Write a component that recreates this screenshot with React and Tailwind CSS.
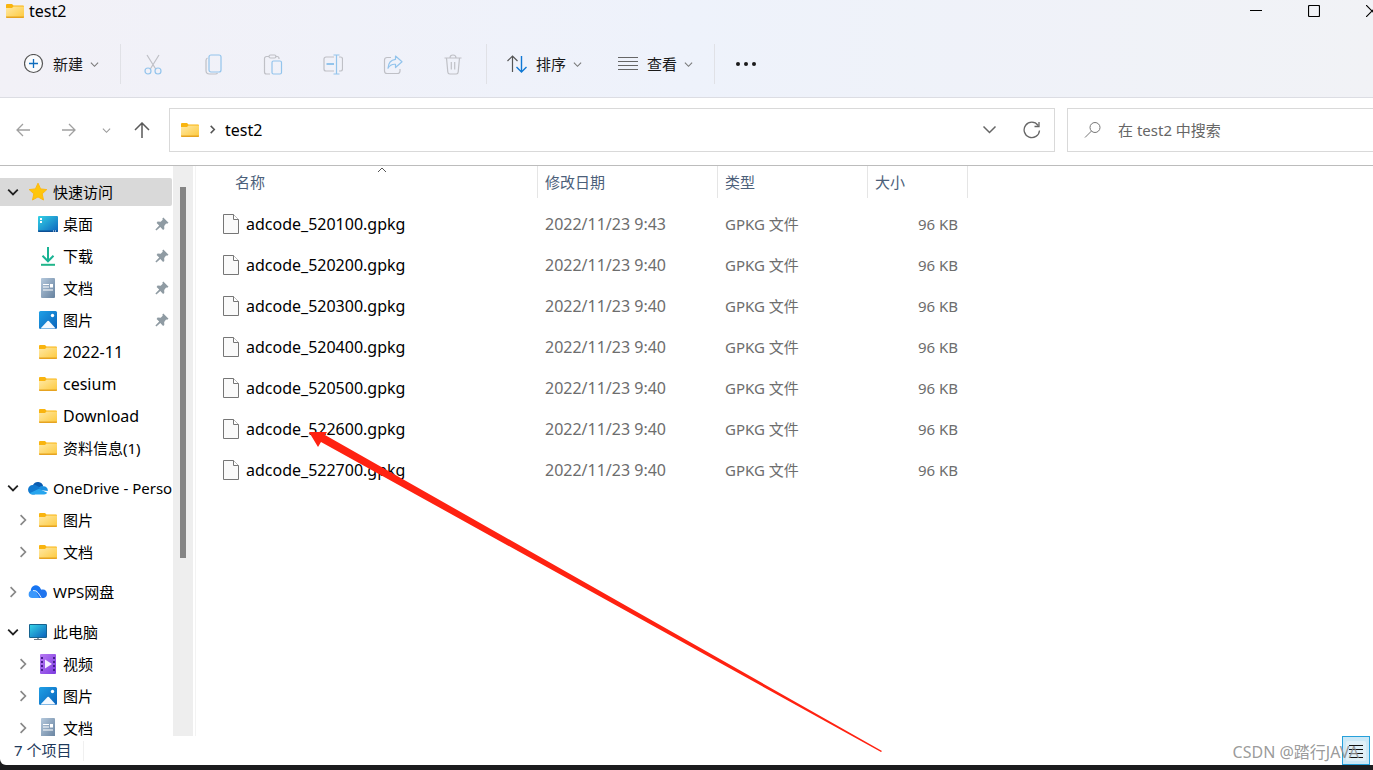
import React from "react";

const FolderIcon = () => (
  <svg width="20" height="20" viewBox="0 0 20 20" className="shrink-0">
    <defs>
      <linearGradient id="folder" x1="0" y1="0" x2="1" y2="1">
        <stop offset="0" stopColor="#ffe9a6" />
        <stop offset="1" stopColor="#fdc93c" />
      </linearGradient>
    </defs>
    <path d="M1 4a1 1 0 0 1 1-1h5l1.500 1.500H18a1 1 0 0 1 1 1V9H1z" fill="#f9b40f" />
    <path d="M1 7h6l1.500-1.500H19V16a1 1 0 0 1-1 1H2a1 1 0 0 1-1-1z" fill="url(#folder)" />
    <path d="M1 15.600V16a1 1 0 0 0 1 1h16a1 1 0 0 0 1-1v-.4z" fill="#e6a321" />
  </svg>
);

const StarIcon = () => (
  <svg width="20" height="20" viewBox="0 0 20 20" className="shrink-0">
    <path
      d="M10 1.200l2.600 5.700 6.200.7-4.600 4.200 1.300 6.200L10 14.900 4.500 18l1.300-6.200L1.200 7.600l6.200-.7z"
      fill="#ffc60a"
      stroke="#fdb813"
      strokeWidth="1"
      strokeLinejoin="round"
    />
  </svg>
);

const DesktopIcon = () => (
  <svg width="20" height="20" viewBox="0 0 20 20" className="shrink-0">
    <defs>
      <linearGradient id="desktop" x1="0" y1="0" x2="1" y2="1">
        <stop offset="0" stopColor="#35d2e6" />
        <stop offset="1" stopColor="#0b63bd" />
      </linearGradient>
    </defs>
    <rect y="2" width="20" height="16" rx="1" fill="url(#desktop)" />
    <path d="M0 16.500h20V17a1 1 0 0 1-1 1H1a1 1 0 0 1-1-1z" fill="#0c4f94" />
    <path d="M2 4h2v2H2zM2 7h2v2H2z" fill="#fff" />
    <path d="M15 17h1M17 17h1" stroke="#fff" />
  </svg>
);

const DownloadIcon = () => (
  <svg width="20" height="20" viewBox="0 0 20 20" className="shrink-0" fill="none">
    <path d="M10 1v14M4.500 9.800L10 15.300l5.500-5.500" stroke="#19b394" strokeWidth="2" />
    <path d="M3 18.800h14" stroke="#20b58a" strokeWidth="2" />
  </svg>
);

const DocumentIcon = () => (
  <svg width="20" height="20" viewBox="0 0 20 20" className="shrink-0">
    <defs>
      <linearGradient id="doc" x1="0" y1="0" x2="1" y2="1">
        <stop offset="0" stopColor="#b4c8dc" />
        <stop offset="1" stopColor="#67829f" />
      </linearGradient>
    </defs>
    <rect x="3" y="0" width="14" height="20" rx="1" fill="url(#doc)" />
    <path d="M5 6.500h6M5 9h6M5 12h10" stroke="#fff" strokeWidth="1.200" />
    <rect x="12" y="6" width="3" height="3.500" fill="#fff" />
  </svg>
);

const PictureIcon = () => (
  <svg width="20" height="20" viewBox="0 0 20 20" className="shrink-0">
    <defs>
      <linearGradient id="pic" x1="0" y1="0" x2="1" y2="1">
        <stop offset="0" stopColor="#1fa0e6" />
        <stop offset="1" stopColor="#0a63bb" />
      </linearGradient>
    </defs>
    <rect x="1" y="1" width="18" height="18" rx="1.500" fill="url(#pic)" />
    <path d="M2.500 18.500l7-7.500a1 1 0 0 1 1.400 0l6.800 7.500z" fill="#f4f9ff" />
    <circle cx="14.500" cy="5.500" r="1.700" fill="#fff" />
  </svg>
);

const VideoIcon = () => (
  <svg width="20" height="20" viewBox="0 0 20 20" className="shrink-0">
    <defs>
      <linearGradient id="video" x1="0" y1="0" x2="1" y2="1">
        <stop offset="0" stopColor="#b87af3" />
        <stop offset="1" stopColor="#7d3be0" />
      </linearGradient>
    </defs>
    <rect x="2" y="0" width="16" height="20" rx="1" fill="url(#video)" />
    <path d="M4 3v15M16 3v15" stroke="#461d8c" strokeWidth="2" strokeDasharray="2 2" />
    <path d="M7 5.500v9l7-4.500z" fill="#f5edff" />
  </svg>
);

const OneDriveIcon = () => (
  <svg width="20" height="20" viewBox="0 0 20 20" className="shrink-0">
    <path d="M5 7a5.500 5.500 0 0 1 10.200 1.200L9 12z" fill="#0a5cb0" />
    <path d="M4.600 16.500A4.700 4.700 0 0 1 5 7q2-.5 3.500.5l6 3.500-8 5.500z" fill="#1079cf" />
    <path d="M11 9.500q2-1.700 4.200-1.300A4.300 4.300 0 0 1 19.800 13L12 12z" fill="#1a8fe0" />
    <path d="M1.500 15.200L11 10.800l8.300 3.900a3.600 3.600 0 0 1-3.300 1.800H4.600q-2 0-3.100-1.300z" fill="#27a5ee" />
  </svg>
);

const WpsIcon = () => (
  <svg width="20" height="20" viewBox="0 0 20 20" className="shrink-0">
    <path d="M3 10a5 5 0 0 1 9.800-3L16 15.500H7z" fill="#1775f2" />
    <path d="M4.500 8.500Q8 7.500 10 10l3.500 6H4.300a3.700 3.700 0 0 1 .2-7.500z" fill="#3a97fb" />
    <path d="M9 12q2-5 6-4.500a4.300 4.300 0 0 1 .5 8.500h-4z" fill="#1f74ee" />
    <path d="M5 8.500Q8.300 8 10.300 11l3 4.800" fill="none" stroke="#d8ecff" />
  </svg>
);

const ComputerIcon = () => (
  <svg width="20" height="20" viewBox="0 0 20 20" className="shrink-0">
    <path d="M9 15h2v2.500H9z" fill="#8e9aa6" />
    <path d="M6 17.500h8" stroke="#6b7782" />
    <rect x="1" y="2" width="18" height="14" rx="1" fill="#16638f" />
    <rect x="2" y="3" width="16" height="12" fill="url(#desktop)" />
  </svg>
);

const PinIcon = () => (
  <svg width="14" height="14" viewBox="0 0 14 14" className="ml-auto shrink-0">
    <path
      d="M8.300.5l5.200 5.200-1.400 1-1-.1-1.900 2.300.1 3-1.200 1-2.800-2.800L1.400 13.600l-1-1L4.200 8.600 1.600 6l1-1.400 3.100.1L7.700 2.800l-.3-1.200z"
      fill="#8f9ba3"
    />
  </svg>
);

const FileIcon = () => (
  <svg width="16" height="20" viewBox="0 0 16 20" className="shrink-0">
    <path d="M.5.500h10l5 5v14H.5z" fill="#fafafa" stroke="#767676" />
    <path d="M10.500.5v5h5" fill="#fff" stroke="#767676" />
  </svg>
);

const Chevron = ({ dir = "down", size = 10, color = "#777", weight = 1.2 }) => {
  const paths = {
    down: "M1 3l4 4 4-4",
    right: "M3 1l4 4-4 4",
    up: "M1 7l4-4 4 4",
  };
  return (
    <svg width={size} height={size} viewBox="0 0 10 10" fill="none" className="shrink-0">
      <path d={paths[dir]} stroke={color} strokeWidth={weight} />
    </svg>
  );
};

const G = "#bfc0c6";
const B = "#93c4ec";

const actions = [
  {
    label: "剪切",
    icon: (
      <>
        <path d="M4 1l9 14.500M16 1L7 15.500" stroke={G} />
        <circle cx="5" cy="17" r="3" stroke={B} />
        <circle cx="15" cy="17" r="3" stroke={B} />
      </>
    ),
  },
  {
    label: "复制",
    icon: (
      <>
        <path d="M4.500 4q-1.500.7-1.500 2.500v10q0 3.500 3.500 3.500h6q1.500 0 2-1" stroke={G} />
        <rect x="6" y="1" width="12" height="17" rx="2" stroke={B} />
      </>
    ),
  },
  {
    label: "粘贴",
    icon: (
      <>
        <path d="M6 2.500H3.500a2 2 0 0 0-2 2V18a2 2 0 0 0 2 2H7M12.500 2.500H14a2 2 0 0 1 2 2V5" stroke={G} />
        <rect x="6" y="1" width="7" height="3" rx="1.500" stroke={G} />
        <rect x="9" y="7" width="9.500" height="13" rx="1.500" stroke={B} />
      </>
    ),
  },
  {
    label: "重命名",
    icon: (
      <>
        <path d="M11 3H3a2 2 0 0 0-2 2v10a2 2 0 0 0 2 2h8M16 3h1.500a2 2 0 0 1 2 2v10a2 2 0 0 1-2 2H16" stroke={G} />
        <path d="M3.500 10H11" stroke={B} strokeWidth="2" />
        <path d="M13.500 1v19M10.500 1h6M10.500 20h6" stroke={B} />
      </>
    ),
  },
  {
    label: "共享",
    icon: (
      <>
        <path d="M8 3.500H4a2.500 2.500 0 0 0-2.500 2.500v11A2.500 2.500 0 0 0 4 19.500h10.500A2.500 2.500 0 0 0 17 17v-2" stroke={G} />
        <path d="M12.500 2l6.500 5.800-6.500 5.700v-3.200q-5-.5-7.500 4 .5-8.300 7.500-9z" stroke={B} strokeLinejoin="round" />
      </>
    ),
  },
  {
    label: "删除",
    icon: (
      <>
        <path d="M1.500 4h17M7 4q0-3 3-3t3 3M3.500 4l1.300 14q.2 2 2 2h6.400q1.800 0 2-2l1.300-14" stroke={G} />
        <path d="M8.300 8v7.500M11.700 8v7.500" stroke={G} />
      </>
    ),
  },
];

const tree = [
  [
    { label: "快速访问", icon: <StarIcon />, open: true, selected: true },
    { label: "桌面", icon: <DesktopIcon />, child: true, pinned: true },
    { label: "下载", icon: <DownloadIcon />, child: true, pinned: true },
    { label: "文档", icon: <DocumentIcon />, child: true, pinned: true },
    { label: "图片", icon: <PictureIcon />, child: true, pinned: true },
    { label: "2022-11", icon: <FolderIcon />, child: true, latin: true },
    { label: "cesium", icon: <FolderIcon />, child: true, latin: true },
    { label: "Download", icon: <FolderIcon />, child: true, latin: true },
    { label: "资料信息(1)", icon: <FolderIcon />, child: true },
  ],
  [
    { label: "OneDrive - Personal", icon: <OneDriveIcon />, open: true },
    { label: "图片", icon: <FolderIcon />, child: true, closed: true },
    { label: "文档", icon: <FolderIcon />, child: true, closed: true },
  ],
  [{ label: "WPS网盘", icon: <WpsIcon />, closed: true }],
  [
    { label: "此电脑", icon: <ComputerIcon />, open: true },
    { label: "视频", icon: <VideoIcon />, child: true, closed: true },
    { label: "图片", icon: <PictureIcon />, child: true, closed: true },
    { label: "文档", icon: <DocumentIcon />, child: true, closed: true },
  ],
];

const files = [
  { name: "adcode_520100.gpkg", date: "2022/11/23 9:43" },
  { name: "adcode_520200.gpkg", date: "2022/11/23 9:40" },
  { name: "adcode_520300.gpkg", date: "2022/11/23 9:40" },
  { name: "adcode_520400.gpkg", date: "2022/11/23 9:40" },
  { name: "adcode_520500.gpkg", date: "2022/11/23 9:40" },
  { name: "adcode_522600.gpkg", date: "2022/11/23 9:40" },
  { name: "adcode_522700.gpkg", date: "2022/11/23 9:40" },
];

const TitleBar = () => (
  <div className="flex h-[22px] items-center pl-[5px]">
    <FolderIcon />
    <h1 className="ml-1 flex-1 text-base leading-5">test2</h1>
    <div className="-mr-7 flex h-full">
      <button aria-label="最小化" className="flex w-[58px] items-center justify-center">
        <svg width="12" height="12" viewBox="0 0 12 12">
          <path d="M0 5.500h12" stroke="#000" />
        </svg>
      </button>
      <button aria-label="最大化" className="flex w-[58px] items-center justify-center">
        <svg width="12" height="12" viewBox="0 0 12 12">
          <rect x=".5" y=".5" width="11" height="11" rx="1" fill="none" stroke="#000" strokeWidth="1.200" />
        </svg>
      </button>
      <button aria-label="关闭" className="flex w-[58px] items-center justify-center">
        <svg width="12" height="12" viewBox="0 0 12 12">
          <path d="M0 0l12 12M12 0L0 12" stroke="#000" strokeWidth="1.200" />
        </svg>
      </button>
    </div>
  </div>
);

const Separator = () => <div className="mr-0.5 ml-[3px] h-10 w-px bg-[#e0e1e6]" />;

const MenuButton = ({ label, children }) => (
  <button className="flex h-10 items-center px-[18px] text-[15px] text-[#1a1a1a]">
    <svg width="20" height="20" viewBox="0 0 20 20" fill="none">
      {children}
    </svg>
    <span className="mr-[7px] ml-[9px]">{label}</span>
    <Chevron size={9} />
  </button>
);

const Toolbar = () => (
  <div role="toolbar" className="flex h-[75px] items-center pt-[9px] pl-[6px]">
    <MenuButton label="新建">
      <circle cx="9.500" cy="9.500" r="9" fill="#fafbfd" stroke="#555" strokeWidth="1.200" />
      <path d="M9.500 5v9M5 9.500h9" stroke="#0f6cbd" strokeWidth="1.300" />
    </MenuButton>
    <Separator />
    {actions.map((a) => (
      <button key={a.label} aria-label={a.label} disabled className="flex h-10 w-[60px] items-center justify-center">
        <svg width="20" height="21" viewBox="0 0 20 21" fill="none" strokeWidth="1.200">
          {a.icon}
        </svg>
      </button>
    ))}
    <Separator />
    <MenuButton label="排序">
      <path d="M5.500 18V2M.5 7l5-5 5 5" stroke="#555" strokeWidth="1.200" />
      <path d="M14.500 2v16M9.500 13l5 5 5-5" stroke="#0f78d4" strokeWidth="1.400" />
    </MenuButton>
    <MenuButton label="查看">
      <path d="M0 3.500h20M0 7.500h20M0 11.500h20M0 15.500h20" stroke="#666" strokeWidth="1.200" />
    </MenuButton>
    <Separator />
    <button aria-label="更多" className="flex h-10 w-[58px] items-center justify-center">
      <svg width="22" height="4" viewBox="0 0 22 4" fill="#1a1a1a">
        <circle cx="3" cy="2" r="2" />
        <circle cx="11" cy="2" r="2" />
        <circle cx="19" cy="2" r="2" />
      </svg>
    </button>
  </div>
);

const AddressBar = () => (
  <div className="flex h-[68px] shrink-0 items-center border-b border-[#bcbcbc] pb-[3px]">
    <button aria-label="后退" className="flex h-10 w-[46px] items-center justify-center">
      <svg width="14" height="14" viewBox="0 0 14 14" fill="none" stroke="#a0a0a0" strokeWidth="1.300">
        <path d="M14 7H1M7 1L1 7l6 6" />
      </svg>
    </button>
    <button aria-label="前进" className="flex h-10 w-[46px] items-center justify-center">
      <svg width="14" height="14" viewBox="0 0 14 14" fill="none" stroke="#a0a0a0" strokeWidth="1.300">
        <path d="M0 7h13M7 1l6 6-6 6" />
      </svg>
    </button>
    <button aria-label="最近浏览的位置" className="flex h-10 w-7 items-center justify-center">
      <Chevron size={9} color="#999" />
    </button>
    <button aria-label="上移" className="flex h-10 w-11 items-center justify-center">
      <svg width="16" height="16" viewBox="0 0 16 16" fill="none" stroke="#5a5a5a" strokeWidth="1.500">
        <path d="M8 16V1M1 8l7-7 7 7" />
      </svg>
    </button>
    <div className="ml-[5px] flex h-11 flex-1 items-center border border-[#d9d9d9] pb-px pl-[10px]">
      <FolderIcon />
      <span className="mx-2 flex">
        <Chevron dir="right" size={9} color="#555" weight={1.7} />
      </span>
      <a href="#" className="flex-1 text-base leading-5">
        test2
      </a>
      <button aria-label="以前的位置" className="flex h-full w-[42px] items-center justify-center">
        <Chevron size={15} color="#666" weight={1} />
      </button>
      <button aria-label="刷新" className="flex h-full w-11 items-center justify-center">
        <svg width="18" height="18" viewBox="0 0 18 18" fill="none" stroke="#666" strokeWidth="1.300">
          <path d="M16.500 9.500A7.700 7.700 0 1 1 15 4.300M16 1v4.500h-4.500" />
        </svg>
      </button>
    </div>
    <label className="ml-3 flex h-11 w-[306px] items-center border border-r-0 border-[#d9d9d9] pl-4">
      <svg width="18" height="18" viewBox="0 0 18 18" fill="none" stroke="#777" className="shrink-0">
        <circle cx="11" cy="6.500" r="5" />
        <path d="M7.500 10L1 16.500" />
      </svg>
      <input
        type="text"
        aria-label="搜索"
        placeholder="在 test2 中搜索"
        className="ml-4 w-full min-w-0 text-[15px] outline-none placeholder:text-[#666]"
      />
    </label>
  </div>
);

const TreeRow = ({ item }) => {
  const expander = item.open ? (
    <Chevron size={12} color="#222" weight={1.5} />
  ) : item.closed ? (
    <Chevron dir="right" size={12} color="#888" weight={1.4} />
  ) : null;
  return (
    <li className="flex h-8 items-center">
      <a
        href="#"
        className={`flex h-7 w-[172px] items-center overflow-hidden rounded-r-xs pr-[3px] leading-5 whitespace-nowrap ${
          item.latin ? "text-base" : "text-[15px]"
        } ${item.child ? "pl-[17px]" : "pl-[7px]"} ${item.selected ? "bg-[#d9d9d9]" : ""}`}
      >
        <span className="flex w-[21px] shrink-0">{expander}</span>
        {item.icon}
        <span className="ml-[5px]">{item.label}</span>
        {item.pinned && <PinIcon />}
      </a>
    </li>
  );
};

const Sidebar = () => (
  <aside className="flex w-[196px] shrink-0 border-r border-[#f3f3f3]">
    <nav className="flex w-[173px] flex-col gap-2 overflow-hidden pt-[10px]">
      {tree.map((group, i) => (
        <ul key={i} className="shrink-0">
          {group.map((item) => (
            <TreeRow key={item.label} item={item} />
          ))}
        </ul>
      ))}
    </nav>
    <div className="w-5 bg-[#eeeeee] pt-[21px] pl-[7px]">
      <div className="h-[371px] w-[6px] bg-[#858585]" />
    </div>
  </aside>
);

const FileTable = () => (
  <main className="min-w-0 flex-1 overflow-hidden">
    <table className="w-[772px] table-fixed border-separate border-spacing-0 text-left">
      <colgroup>
        <col className="w-[342px]" />
        <col className="w-[180px]" />
        <col className="w-[150px]" />
        <col className="w-[100px]" />
      </colgroup>
      <thead>
        <tr className="h-8 text-[15px] text-[#4c607a] [&>th]:border-r [&>th]:border-[#e5e5e5] [&>th]:p-0 [&>th]:font-normal">
          <th className="relative">
            <span className="pl-[39px]">名称</span>
            <span className="absolute -top-px left-[181px]">
              <Chevron dir="up" size={10} color="#555" weight={1} />
            </span>
          </th>
          <th>
            <span className="pl-[7px]">修改日期</span>
          </th>
          <th>
            <span className="pl-[7px]">类型</span>
          </th>
          <th>
            <span className="pl-[7px]">大小</span>
          </th>
        </tr>
        <tr className="h-[5px]" />
      </thead>
      <tbody>
        {files.map((f) => (
          <tr key={f.name} className="h-[41px] text-[15px] leading-5 text-[#6d6d6d] [&>td]:p-0">
            <td>
              <div className="flex items-center gap-[7px] pl-[27px] text-base leading-5 text-black">
                <FileIcon />
                {f.name}
              </div>
            </td>
            <td className="text-base leading-5">
              <span className="pl-[7px]">{f.date}</span>
            </td>
            <td>
              <span className="pl-[7px]">GPKG 文件</span>
            </td>
            <td className="text-right">
              <span className="pr-[10px]">96 KB</span>
            </td>
          </tr>
        ))}
      </tbody>
    </table>
  </main>
);

const StatusBar = () => (
  <footer className="relative flex h-[29px] shrink-0 items-center pr-[3px] pl-[14px]">
    <span className="pb-0.5 text-[15px] leading-5 text-[#1e395b]">7 个项目</span>
    <div className="ml-3 h-5 w-px bg-[#f0f0f0]" />
    <button
      aria-label="详细信息"
      className="ml-auto flex h-[29px] w-7 items-center justify-center border border-[#26a0da] bg-[#cce8f6]"
    >
      <svg width="20" height="20" viewBox="0 0 20 20">
        <rect width="20" height="20" rx="2" fill="#e0f0f8" />
        <path d="M3 4.500h14M3 8.500h14M3 12.500h14M3 16.500h14" stroke="#111" />
      </svg>
    </button>
    <span className="absolute right-[14px] bottom-[3px] text-base leading-5 text-[#8e8e8e]/90">CSDN @踏行JAVA</span>
  </footer>
);

export default function App() {
  return (
    <div className="relative flex h-screen flex-col overflow-hidden bg-[#1c1c1e] pb-[5px] font-['Noto_Sans','Noto_Sans_CJK_SC',sans-serif] text-black">
      <div className="flex min-h-0 flex-1 flex-col overflow-hidden rounded-bl-md bg-white">
        <header className="shrink-0 border-b border-[#dcdde3] bg-linear-to-r from-[#f2f1f7] via-[#eef2fb] to-[#f1f2f6]">
          <TitleBar />
          <Toolbar />
        </header>
        <AddressBar />
        <div className="flex min-h-0 flex-1">
          <Sidebar />
          <FileTable />
        </div>
        <StatusBar />
      </div>

      {/* Red pointer drawn over the list */}
      <svg
        className="pointer-events-none absolute top-[430px] left-[308px]"
        width="576"
        height="324"
        viewBox="0 0 576 324"
      >
        <path d="M1 2L19 2l-2 3L574 321 573 322 13 12l-3 5z" fill="#ff2211" />
      </svg>
    </div>
  );
}
